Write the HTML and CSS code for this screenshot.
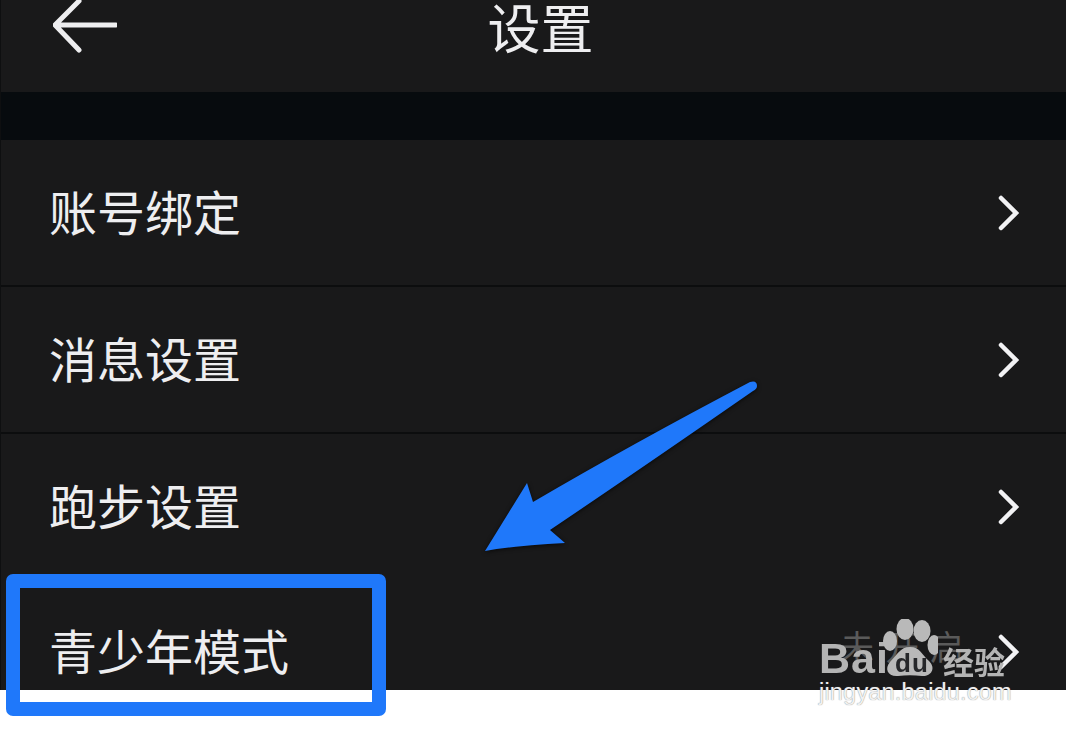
FILE: index.html
```html
<!DOCTYPE html>
<html lang="zh-CN">
<head>
  <meta charset="UTF-8">
  <title>设置</title>
  <link rel="stylesheet" href="styles.css">
</head>
<body>

<div class="screen">
  <div class="header">
    <svg class="back" width="64" height="54" viewBox="0 0 64 54">
      <path d="M26 1 L2 25 L26 50 M3 25 H63" fill="none" stroke="#eeeef0" stroke-width="5" stroke-linecap="round" stroke-linejoin="miter"/>
    </svg>
    <div class="title">设置</div>
  </div>
  <div class="gap"></div>

  <div class="row">
    <span class="label">账号绑定</span>
    <svg class="chev" width="22" height="38" viewBox="0 0 22 38"><path d="M3 4 L18 19 L3 34" /></svg>
  </div>
  <div class="row">
    <span class="label">消息设置</span>
    <svg class="chev" width="22" height="38" viewBox="0 0 22 38"><path d="M3 4 L18 19 L3 34" /></svg>
  </div>
  <div class="row no-line">
    <span class="label">跑步设置</span>
    <svg class="chev" width="22" height="38" viewBox="0 0 22 38"><path d="M3 4 L18 19 L3 34" /></svg>
  </div>
  <div class="row last">
    <span class="label">青少年模式</span>
    <span class="value">未开启</span>
    <svg class="chev" width="22" height="38" viewBox="0 0 22 38"><path d="M3 4 L18 19 L3 34" /></svg>
  </div>
</div>

<!-- annotations drawn on top of the screenshot -->
<div class="mark-box"></div>

<svg class="mark-arrow" width="1066" height="730" viewBox="0 0 1066 730">
  <path d="M485 551 L527 483 L533 502 Q632 444 750 382 Q757 380 757 386 Q757 389 753 391 Q642 468 550 530 L565 543 Q520 545 485 551 Z" fill="#1f78fa"/>
</svg>

<div class="logo">
  <span class="logo-bai">Bai</span>
  <svg class="paw" width="56" height="58" viewBox="0 0 56 58">
    <ellipse cx="23" cy="10" rx="8.5" ry="11"/>
    <ellipse cx="40" cy="12" rx="8.5" ry="11"/>
    <ellipse cx="8" cy="22" rx="7" ry="10"/>
    <ellipse cx="52" cy="26" rx="6.5" ry="10"/>
    <path d="M28 28 C38 28 40 36 47 42 C55 50 48 58 40 57 C32 56 24 56 16 57 C6 58 2 50 8 43 C15 36 18 28 28 28 Z"/>
  </svg>
  <span class="logo-du">du</span>
  <span class="logo-jy">经验</span>
</div>
<div class="logo-url">jingyan.baidu.com</div>

</body>
</html>
```

FILE: styles.css
```css
body {
  margin: 0;
  background: #fff;
  font-family: "Noto Sans CJK SC", sans-serif;
  overflow: hidden;
}
.screen {
  height: 690px;
  overflow: hidden;
  background: #19191a;
  border-left: 1px solid #0e0f10;
  box-sizing: border-box;
}
.header {
  height: 92px;
  display: flex;
  justify-content: center;
  position: relative;
}
.back {
  position: absolute;
  left: 52px;
  top: 0;
}
.title {
  font-size: 53px;
  line-height: 52px;
  color: #eeeef0;
  margin-left: 14px;
}
.gap {
  height: 48px;
  background: #070b0e;
}
.row {
  height: 145px;
  border-bottom: 2px solid #0c0d0e;
  display: flex;
  align-items: center;
  padding: 0 46px 0 48px;
}
.row.no-line {
  border-bottom-color: transparent;
}
.row.last {
  height: 141px;
  border-bottom: none;
}
.label {
  font-size: 48px;
  color: #eeeef0;
  flex: 1;
  margin-bottom: 6px;
}
.value {
  font-size: 34px;
  letter-spacing: 11px;
  color: #5a5a5a;
  margin-right: 23px;
  margin-bottom: 12px;
}
.chev {
  fill: none;
  stroke: #f2f2f4;
  stroke-width: 4.5;
  stroke-linecap: round;
}
.mark-box {
  position: absolute;
  left: 6px;
  top: 574px;
  width: 352px;
  height: 114px;
  border: 14.5px solid #1f78fa;
  border-radius: 7px;
}
.mark-arrow {
  position: absolute;
  left: 0;
  top: 0;
  filter: drop-shadow(0 1px 2px #000a);
}
.logo {
  position: absolute;
  left: 819px;
  top: 617px;
  height: 60px;
  width: 190px;
  color: #b4b4b4;
  font-family: "Liberation Sans", sans-serif;
  font-weight: bold;
  filter: blur(0.4px);
}
.logo-bai {
  position: absolute;
  left: 0;
  top: 17px;
  font-size: 43px;
  line-height: 48px;
  letter-spacing: 1px;
}
.paw {
  position: absolute;
  left: 63px;
  top: 2px;
  fill: #b9b9b9;
}
.logo-du {
  position: absolute;
  left: 76px;
  top: 32px;
  font-size: 26px;
  line-height: 28px;
  letter-spacing: 1px;
  color: #26272a;
}
.logo-jy {
  position: absolute;
  left: 124px;
  top: 23px;
  font-family: "Noto Sans CJK SC", sans-serif;
  font-size: 31px;
  line-height: 42px;
  white-space: nowrap;
}
.logo-url {
  position: absolute;
  left: 819px;
  top: 678px;
  font-family: "Liberation Sans", sans-serif;
  font-size: 23.5px;
  line-height: 28px;
  letter-spacing: 0.2px;
  color: #f1f1f1;
  text-shadow: 0 0 1px #777;
}
```
